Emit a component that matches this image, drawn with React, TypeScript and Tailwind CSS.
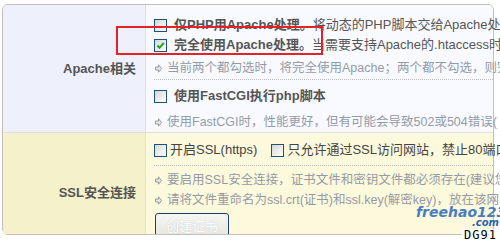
const font = { fontFamily: '"Liberation Sans", "Noto Sans CJK SC", sans-serif' };

const Box = ({ checked = false }: { checked?: boolean }) => (
  <span className="relative inline-block w-[13px] h-[13px] shrink-0 border border-[#1c5180] bg-gradient-to-br from-[#d8d8d2] to-white">
    {checked && (
      <svg viewBox="0 0 11 11" className="absolute left-0 top-0 w-[11px] h-[11px]">
        <path d="M2.5 5.5 L4.5 7.8 L8.8 2.8" stroke="#1fa21f" strokeWidth="2" fill="none" />
      </svg>
    )}
  </span>
);

const Arrow = () => (
  <svg viewBox="0 0 7 9" className="w-[7px] h-[9px] shrink-0">
    <path d="M0.5 3 H3.5 V0.8 L6.5 4.5 L3.5 8.2 V6 H0.5 Z" fill="#e6e6e6" stroke="#9a9a9a" strokeWidth="1" />
  </svg>
);

const Hint = ({ children }: { children: React.ReactNode }) => (
  <div className="flex items-center gap-[5px] h-5 pl-px whitespace-nowrap text-[12.5px] text-[#959ba6]">
    <Arrow />
    <span>{children}</span>
  </div>
);

const App = () => {
  return (
    <div className="relative w-[500px] h-[240px] bg-white overflow-hidden text-[13px]" style={font}>
      <div className="absolute left-[2px] top-[4px] w-[492px] h-[231px] border border-[#cbbcbc] rounded-[6px] overflow-y-clip overflow-x-visible">
        <div className="grid grid-cols-[143px_1fr] h-full grid-rows-[128px_1fr]">
          {/* Apache row */}
          <div className="bg-[#eef1fc] rounded-tl-[5px] border-r border-b border-[#dae0ec] flex items-center justify-end pr-[9px] font-bold text-[#555]">
            Apache相关
          </div>
          <div className="bg-[#f8faff] rounded-tr-[5px] border-b border-[#dae0ec] pl-2 pt-[10px] whitespace-nowrap min-w-0">
            <div className="flex items-center gap-[7px] h-5 text-[#555]">
              <Box />
              <span><b>仅PHP用Apache处理。</b>将动态的PHP脚本交给Apache处理</span>
            </div>
            <div className="flex items-center gap-[7px] h-5 text-[#555]">
              <Box checked />
              <span><b>完全使用Apache处理。</b>当需要支持Apache的.htaccess时</span>
            </div>
            <div className="mt-[3px]">
              <Hint>当前两个都勾选时，将完全使用Apache；两个都不勾选，则完全使用</Hint>
            </div>
            <div className="border-t border-dotted border-[#bbb] mt-[1px]" />
            <div className="flex items-center gap-[7px] h-5 mt-[6px] text-[#555]">
              <Box />
              <b>使用FastCGI执行php脚本</b>
            </div>
            <div className="mt-[6px]">
              <Hint>使用FastCGI时，性能更好，但有可能会导致502或504错误(</Hint>
            </div>
          </div>

          {/* SSL row */}
          <div className="bg-[#f4f1cb] rounded-bl-[5px] border-r border-[#dae0ec] flex items-center justify-end pr-[9px] pt-[12px] font-bold text-[#555]">
            SSL安全连接
          </div>
          <div className="bg-[#fcf9dc] rounded-br-[5px] pl-2 pt-[9px] whitespace-nowrap min-w-0">
            <div className="flex items-center h-4 text-[#444]">
              <Box />
              <span className="ml-[3px]">开启SSL(https)</span>
              <span className="ml-[14px] flex"><Box /></span>
              <span className="ml-[3px]">只允许通过SSL访问网站，禁止80端口</span>
            </div>
            <div className="border-t border-dotted border-[#bbb] mt-[7px]" />
            <div className="mt-[4px]">
              <Hint>要启用SSL安全连接，证书文件和密钥文件都必须存在(建议您先</Hint>
            </div>
            <Hint>请将文件重命名为ssl.crt(证书)和ssl.key(解密key)，放在该网站</Hint>
            <button className="mt-[3px] ml-px w-[74px] h-[28px] rounded-[3px] border border-[#1f3f6c] bg-gradient-to-b from-[#f6f6f2] to-[#e4e4de] text-white text-[13px] [text-shadow:0_0_1px_#bbb]">
              创建证书
            </button>
          </div>
        </div>
      </div>

      {/* red highlight */}
      <div className="absolute left-[116px] top-[26px] w-[207px] h-[29px] border-2 border-[#e2242a]" />

      {/* watermark */}
      <div className="absolute left-[416px] top-[205px] text-[#4a7cc0] font-bold italic text-[14px] leading-none" style={{ fontFamily: '"DejaVu Sans", sans-serif' }}>
        freehao123
      </div>
      <div className="absolute left-[472px] top-[218px] text-[#2a5fb0] font-bold italic text-[10px] leading-none" style={{ fontFamily: '"DejaVu Sans", sans-serif' }}>
        .com
      </div>
      <div className="absolute left-[462px] top-[229px] px-[2px] bg-white text-black text-[12px] leading-none tracking-[1px]" style={{ fontFamily: '"DejaVu Sans Mono", monospace' }}>
        DG91
      </div>
    </div>
  );
};

export default App;
